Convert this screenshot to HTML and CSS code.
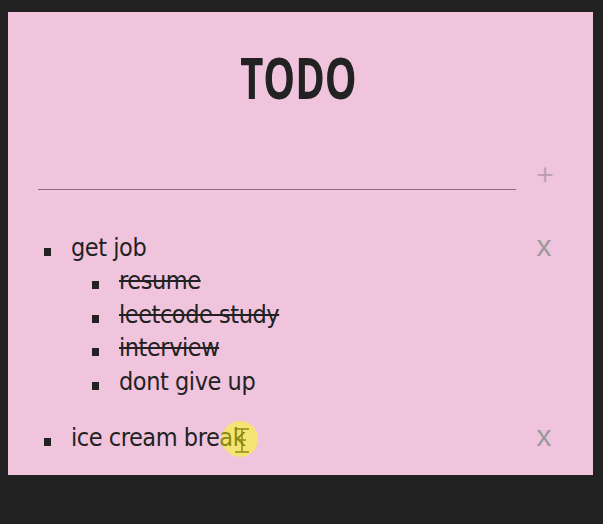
FILE: index.html
```html
<!DOCTYPE html>
<html lang="en">
<head>
  <meta charset="UTF-8">
  <meta name="viewport" content="width=device-width, initial-scale=1.0">
  <title>TODO</title>
  <link rel="stylesheet" href="styles.css">
</head>
<body>
  <div class="container">
    <h1><span class="title-text">TODO</span></h1>

    <form class="add-form">
      <input type="text" class="add-input">
      <button type="button" class="add-btn">+</button>
    </form>

    <ul class="todo-list">
      <li class="todo-item">
        <div class="todo-row">
          <span class="todo-text">get job</span>
          <button type="button" class="remove-btn">x</button>
        </div>
        <ul class="sub-list">
          <li class="sub-item"><span class="done">resume</span></li>
          <li class="sub-item"><span class="done">leetcode study</span></li>
          <li class="sub-item"><span class="done">interview</span></li>
          <li class="sub-item"><span>dont give up</span></li>
        </ul>
      </li>
      <li class="todo-item">
        <div class="todo-row">
          <span class="todo-text">ice cream bre<span class="cursor-wrap"><span class="cursor-spot"></span><span class="under-cursor">ak</span><svg class="cursor-beam" width="14" height="25" viewBox="0 0 14 25"><path d="M0 1h14M7 1v23M0 24h14M3 12h8" fill="none" stroke="#8a8a12" stroke-width="1.5"/></svg></span></span>
          <button type="button" class="remove-btn">x</button>
        </div>
      </li>
    </ul>
  </div>
</body>
</html>
```

FILE: styles.css
```css
* { box-sizing: border-box; }
html, body {
  height: 100%;
}
body {
  margin: 0;
  padding: 12px 10px 49px 8px;
  background-color: #222222;
  font-family: "DejaVu Sans", sans-serif;
  font-stretch: condensed;
  color: #222222;
}
.container {
  height: 463px;
  background-color: #f1c4de;
  padding: 34px 40px 0 30px;
  overflow: hidden;
}
h1 {
  margin: 0;
  height: 62px;
  text-align: center;
  font-family: "Open Sans", sans-serif;
  font-stretch: normal;
  font-size: 58px;
  line-height: 62px;
  font-weight: 700;
  padding-left: 6px;
}
.title-text {
  display: inline-block;
  transform: scaleX(0.69);
}
.add-form {
  display: flex;
  align-items: flex-end;
  margin-top: 46px;
  height: 36px;
}
.add-input {
  flex: none;
  width: 478px;
  height: 36px;
  border: none;
  border-bottom: 1px solid #8a6a86;
  background: transparent;
  outline: none;
}
.add-btn,
.remove-btn {
  border: none;
  background: none;
  padding: 0;
  font-family: "Liberation Sans", sans-serif;
  color: #999a9a;
  text-align: center;
  width: 18px;
}
.add-btn {
  flex: none;
  font-size: 30px;
  line-height: 30px;
  margin: 6px 0 0 20px;
  align-self: flex-start;
  color: #bf9fb8;
}
.remove-btn {
  font-size: 30px;
  line-height: 30px;
}
.todo-list {
  list-style: none;
  margin: 41px 0 0;
  padding: 0;
}
.todo-item {
  margin-bottom: 22.5px;
  font-size: 25px;
  letter-spacing: -0.45px;
}
.todo-row {
  display: flex;
  align-items: baseline;
  height: 32px;
  line-height: 32px;
  padding-left: 6px;
}
.todo-row::before,
.sub-item::before {
  content: "";
  flex: none;
  width: 7px;
  height: 8px;
  margin-right: 20px;
  background-color: #222222;
}
.todo-text {
  position: relative;
  flex: 1;
}
.sub-list {
  list-style: none;
  margin: 1px 0 0;
  padding: 0 0 0 54px;
}
.sub-item {
  display: flex;
  align-items: baseline;
  height: 33.6px;
  line-height: 33.6px;
}
.done {
  text-decoration: line-through;
  text-decoration-thickness: 2px;
}
.cursor-wrap {
  position: relative;
  display: inline-block;
}
.cursor-spot {
  position: absolute;
  left: 3px;
  top: -1px;
  width: 36px;
  height: 36px;
  border-radius: 50%;
  background-color: #f5e473;
}
.under-cursor {
  position: relative;
  color: #8a8a12;
}
.cursor-beam {
  position: absolute;
  left: 16px;
  top: 6px;
}
```
